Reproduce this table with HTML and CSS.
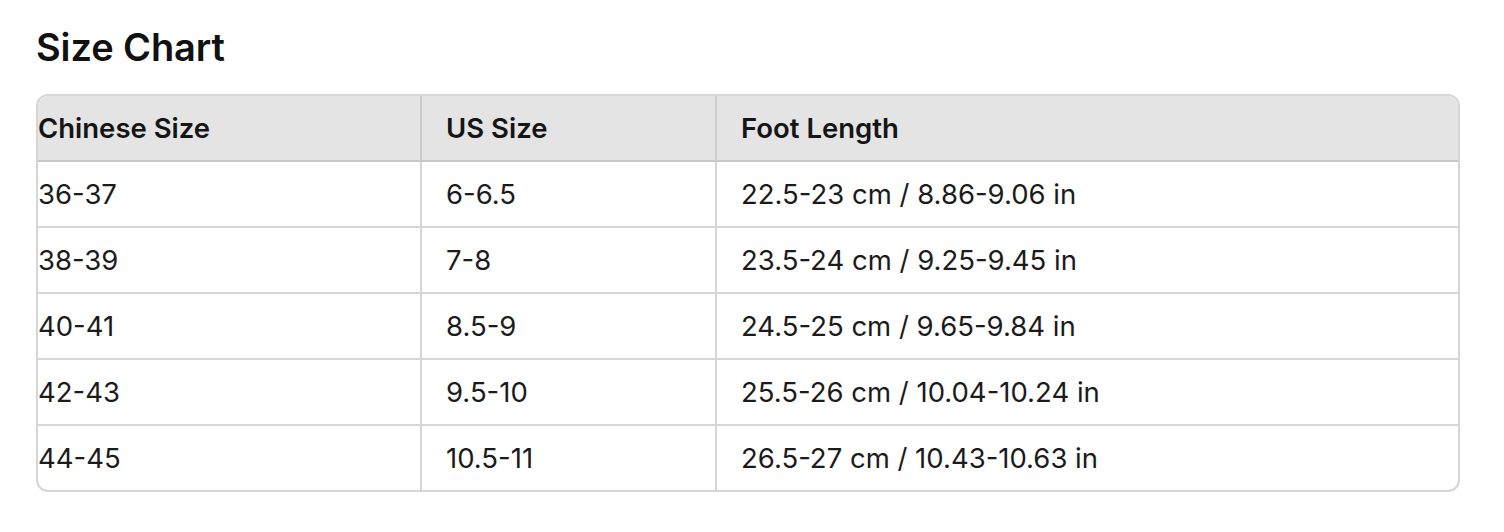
FILE: index.html
```html
<!DOCTYPE html>
<html lang="en">
<head>
<meta charset="utf-8">
<title>Size Chart</title>
<link rel="stylesheet" href="styles.css">
</head>
<body>
<main class="page">
  <h2 class="title">Size Chart</h2>
  <div class="table-wrap">
    <table class="chart">
      <colgroup>
        <col class="c1"><col class="c2"><col class="c3">
      </colgroup>
      <thead>
        <tr><th>Chinese Size</th><th>US Size</th><th>Foot Length</th></tr>
      </thead>
      <tbody>
        <tr><td>36-37</td><td>6-6.5</td><td>22.5-23 cm / 8.86-9.06 in</td></tr>
        <tr><td>38-39</td><td>7-8</td><td>23.5-24 cm / 9.25-9.45 in</td></tr>
        <tr><td>40-41</td><td>8.5-9</td><td>24.5-25 cm / 9.65-9.84 in</td></tr>
        <tr><td>42-43</td><td>9.5-10</td><td>25.5-26 cm / 10.04-10.24 in</td></tr>
        <tr><td>44-45</td><td>10.5-11</td><td>26.5-27 cm / 10.43-10.63 in</td></tr>
      </tbody>
    </table>
  </div>
</main>
</body>
</html>
```
FILE: styles.css
```css
html, body {
  margin: 0;
  padding: 0;
  background: #ffffff;
}
body {
  font-family: Inter, "Noto Sans", "Liberation Sans", sans-serif;
  color: #1a1a1a;
}
.page {
  padding: 24px 0 0 36px;
  width: 1424px;
}
.title {
  margin: 0 0 24px 0;
  font-size: 38px;
  font-weight: 600;
  line-height: 46px;
  letter-spacing: -0.1px;
  color: #111;
}
.table-wrap {
  border: 2px solid #d6d6d6;
  border-radius: 12px;
  overflow: hidden;
}
.chart {
  width: 100%;
  border-collapse: collapse;
  table-layout: fixed;
  font-size: 27.5px;
}
.c1 { width: 383px; }
.c2 { width: 295px; }
.chart th, .chart td {
  height: 64px;
  padding: 0 0 0 24px;
  text-align: left;
  vertical-align: middle;
  border-left: 2px solid #d6d6d6;
  border-top: 2px solid #d6d6d6;
}
.chart th:first-child, .chart td:first-child {
  border-left: none;
  padding-left: 0;
}
.chart thead th {
  border-top: none;
  background: #e4e4e4;
  font-weight: 600;
  color: #151515;
  border-left-color: #cbcbcb;
  border-bottom: 2px solid #c8c8c8;
}
.chart td {
  font-weight: 400;
  color: #1b1b1b;
}
```
